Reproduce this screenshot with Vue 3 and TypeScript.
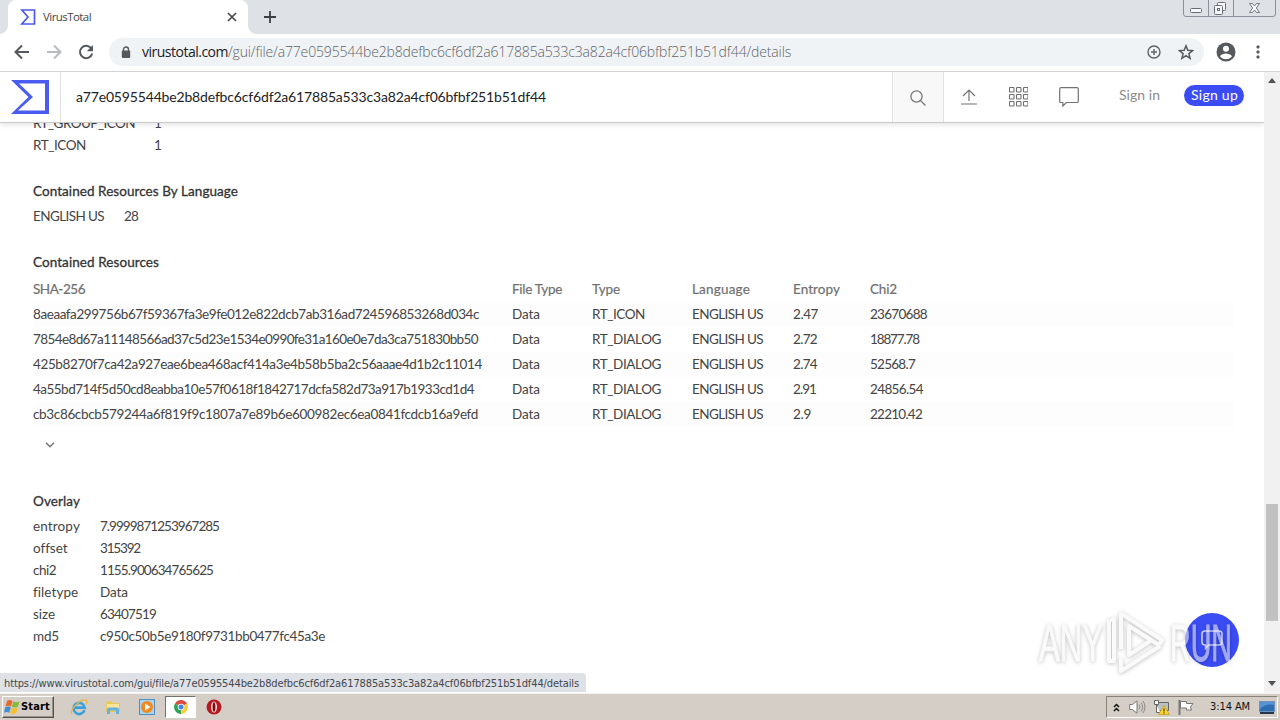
<script setup lang="ts">
import type { Directive } from 'vue'

// Spreads the letters of a label so that its ink takes the given width in pixels.
const vFit: Directive<HTMLElement, number> = {
  mounted(el, binding) {
    const count = (el.textContent ?? '').length
    const natural = el.getBoundingClientRect().width
    if (count > 1) el.style.letterSpacing = `${(binding.value - 1 - natural) / count}px`
  },
}

interface Resource { sha: string; width: number; type: string; typeWidth: number; entropy: string; entropyWidth: number; chi: string; chiWidth: number }
interface Field { name: string; nameWidth: number; value: string; valueWidth: number }

const hash = 'a77e0595544be2b8defbc6cf6df2a617885a533c3a82a4cf06bfbf251b51df44'

const resources: Resource[] = [
  { sha: '8aeaafa299756b67f59367fa3e9fe012e822dcb7ab316ad724596853268d034c', width: 447, type: 'RT_ICON', typeWidth: 54, entropy: '2.47', entropyWidth: 26, chi: '23670688', chiWidth: 58 },
  { sha: '7854e8d67a11148566ad37c5d23e1534e0990fe31a160e0e7da3ca751830bb50', width: 446, type: 'RT_DIALOG', typeWidth: 70, entropy: '2.72', entropyWidth: 25, chi: '18877.78', chiWidth: 50 },
  { sha: '425b8270f7ca42a927eae6bea468acf414a3e4b58b5ba2c56aaae4d1b2c11014', width: 450, type: 'RT_DIALOG', typeWidth: 70, entropy: '2.74', entropyWidth: 25, chi: '52568.7', chiWidth: 46 },
  { sha: '4a55bd714f5d50cd8eabba10e57f0618f1842717dcfa582d73a917b1933cd1d4', width: 442, type: 'RT_DIALOG', typeWidth: 70, entropy: '2.91', entropyWidth: 24, chi: '24856.54', chiWidth: 54 },
  { sha: 'cb3c86cbcb579244a6f819f9c1807a7e89b6e600982ec6ea0841fcdcb16a9efd', width: 446, type: 'RT_DIALOG', typeWidth: 70, entropy: '2.9', entropyWidth: 19, chi: '22210.42', chiWidth: 53 },
]

const overlay: Field[] = [
  { name: 'entropy', nameWidth: 48, value: '7.9999871253967285', valueWidth: 120 },
  { name: 'offset', nameWidth: 35, value: '315392', valueWidth: 41 },
  { name: 'chi2', nameWidth: 24, value: '1155.900634765625', valueWidth: 114 },
  { name: 'filetype', nameWidth: 46, value: 'Data', valueWidth: 29 },
  { name: 'size', nameWidth: 23, value: '63407519', valueWidth: 57 },
  { name: 'md5', nameWidth: 27, value: 'c950c50b5e9180f9731bb0477fc45a3e', valueWidth: 226 },
]
</script>

<template>
  <div class="screen">
    <div class="tabstrip">
      <div class="tab">
        <svg class="tab-logo" width="16" height="16" viewBox="0 0 16 16"><path d="M1.8 1H14.500V15H1.800L8 8Z" fill="none" stroke="#4a58ee" stroke-width="1.700" /></svg>
        <span v-fit="49" class="tab-title">VirusTotal</span>
        <svg class="tab-close" width="10" height="10" viewBox="0 0 10 10"><path d="M1 1l8 8M9 1L1 9" stroke="#45484b" stroke-width="1.700" /></svg>
      </div>
      <svg class="new-tab" width="12" height="12" viewBox="0 0 12 12"><path d="M6 0v12M0 6h12" stroke="#3c4043" stroke-width="1.800" /></svg>
      <div class="winbuttons">
        <svg width="93" height="17" viewBox="0 0 93 17" fill="none">
          <path d="M.5 0V14Q.5 16.500 3 16.500H90Q92.500 16.500 92.500 14V0M25.500 0V16M50.500 0V16" stroke="#8b919b" />
          <rect x="7.500" y="8.500" width="11" height="4" rx="1" fill="#f7f8fa" stroke="#686d75" />
          <rect x="34.500" y="2.500" width="8" height="8" rx="1" fill="#f7f8fa" stroke="#686d75" />
          <rect x="31.500" y="5.500" width="8" height="9" rx="1" fill="#f7f8fa" stroke="#686d75" /><rect x="34.500" y="8.500" width="2" height="2" stroke="#686d75" />
          <path d="M66.500 3.500h3l2 2.500 2-2.500h3l-3.200 4.500 3.200 4.500h-3l-2-2.500-2 2.500h-3l3.200-4.500z" fill="#f7f8fa" stroke="#757a82" />
        </svg>
      </div>
    </div>

    <div class="toolbar">
      <svg class="nav" width="16" height="16" viewBox="0 0 16 16"><path d="M15 8H2M8 1.500L1.500 8 8 14.500" fill="none" stroke="#55585c" stroke-width="2" /></svg>
      <svg class="nav" width="16" height="16" viewBox="0 0 16 16"><path d="M1 8h13M8 1.500L14.500 8 8 14.500" fill="none" stroke="#b9bbbd" stroke-width="2" /></svg>
      <svg class="nav" width="16" height="16" viewBox="0 0 16 16"><path d="M13.300 4.400A6.200 6.200 0 1 0 14.200 9.500" fill="none" stroke="#55585c" stroke-width="2" /><path d="M15 1v6.200H8.800z" fill="#55585c" /></svg>
      <div class="omnibox">
        <svg class="lock" width="10" height="12" viewBox="0 0 10 12"><path d="M2.500 5V3.500a2.500 2.500 0 0 1 5 0V5" fill="none" stroke="#55585c" stroke-width="1.400" /><rect x=".8" y="4.500" width="8.400" height="7.500" rx="1" fill="#55585c" /></svg>
        <span v-fit="87" class="url host">virustotal.com</span><span v-fit="564" class="url path">/gui/file/{{ hash }}/details</span>
        <svg class="zoomed" width="14" height="14" viewBox="0 0 14 14" fill="none" stroke="#5f6368" stroke-width="1.400"><circle cx="7" cy="7" r="6" /><path d="M7 4v6M4 7h6" /></svg>
        <svg class="star" width="16" height="16" viewBox="0 0 16 16"><path d="M8 1.800l1.800 4.500 4.800.3-3.700 3 1.200 4.700L8 11.700l-4.100 2.600 1.200-4.700-3.700-3 4.800-.3z" fill="none" stroke="#55585c" stroke-width="1.500" /></svg>
      </div>
      <svg class="avatar" width="20" height="20" viewBox="0 0 20 20"><circle cx="10" cy="10" r="9.500" fill="#55585c" /><circle cx="10" cy="6.800" r="3" fill="#fff" /><path d="M4 14.300c1.200-2 3.500-2.800 6-2.800s4.800.8 6 2.800c-1.400 1.800-3.500 2.900-6 2.900s-4.600-1.100-6-2.900z" fill="#fff" /></svg>
      <svg class="dots" width="4" height="14" viewBox="0 0 4 14" fill="#55585c"><rect x=".5" y=".5" width="3" height="3" rx="1" /><rect x=".5" y="5.500" width="3" height="3" rx="1" /><rect x=".5" y="10.500" width="3" height="3" rx="1" /></svg>
    </div>

    <div class="viewport">
      <div class="page">
        <header class="header">
          <div class="brand"><svg width="38" height="34" viewBox="0 0 38 34"><path fill-rule="evenodd" d="M0 0H38V34H0L17.500 17ZM8 3.500L22 17 7 30.500H34V3.500Z" fill="#4a5cf0" /></svg></div>
          <div class="query"><span v-fit="471">{{ hash }}</span></div>
          <div class="search"><svg width="16" height="16" viewBox="0 0 16 16" fill="none" stroke="#777" stroke-width="1.300"><circle cx="6.500" cy="6.500" r="5.600" /><path d="M10.600 10.600l4.900 4.900" /></svg></div>
          <svg class="upload" width="16" height="16" viewBox="0 0 16 16" fill="none" stroke="#737373" stroke-width="1.200"><path d="M8 12V1M2 7l6-6 6 6M0 15h16" /></svg>
          <svg class="apps" width="19" height="20" viewBox="0 0 19 20" fill="none" stroke="#6c6c6c" stroke-width="1.100">
            <template v-for="r in 3" :key="r"><rect v-for="c in 3" :key="c" :x="c * 7 - 6.5" :y="r * 7 - 6.5" width="4.500" height="4.500" rx=".8" /></template>
          </svg>
          <svg class="comments" width="20" height="20" viewBox="0 0 20 20" fill="none" stroke="#737373" stroke-width="1.200"><path d="M2 .7h16q1.300 0 1.300 1.300v12.200q0 1.300-1.300 1.300H7.500L3.800 19v-3.500H2Q.7 15.500.7 14.200V2Q.7.700 2 .7z" /></svg>
          <div class="signin"><span v-fit="42">Sign in</span></div>
          <div class="signup"><span v-fit="48">Sign up</span></div>
        </header>

        <main class="details">
          <div class="line"><span class="res-name"><span v-fit="103">RT_GROUP_ICON</span></span><span>1</span></div>
          <div class="line"><span class="res-name"><span v-fit="54">RT_ICON</span></span><span>1</span></div>
          <h3><span v-fit="206">Contained Resources By Language</span></h3>
          <div class="line"><span class="lang-name"><span v-fit="72">ENGLISH US</span></span><span v-fit="15">28</span></div>
          <h3><span v-fit="127">Contained Resources</span></h3>
          <div class="row head">
            <div><span v-fit="53">SHA-256</span></div><div><span v-fit="51">File Type</span></div><div><span v-fit="29">Type</span></div><div><span v-fit="59">Language</span></div><div><span v-fit="48">Entropy</span></div><div><span v-fit="28">Chi2</span></div>
          </div>
          <div v-for="r in resources" :key="r.sha" class="row">
            <div><span v-fit="r.width">{{ r.sha }}</span></div><div><span v-fit="29">Data</span></div><div><span v-fit="r.typeWidth">{{ r.type }}</span></div><div><span v-fit="72">ENGLISH US</span></div><div><span v-fit="r.entropyWidth">{{ r.entropy }}</span></div><div><span v-fit="r.chiWidth">{{ r.chi }}</span></div>
          </div>
          <div class="more"><svg width="10" height="6" viewBox="0 0 10 6"><path d="M1 .8l4 4 4-4" fill="none" stroke="#737373" stroke-width="1.400" /></svg></div>
          <h3 class="overlay-title"><span v-fit="48">Overlay</span></h3>
          <div v-for="f in overlay" :key="f.name" class="line"><span class="field"><span v-fit="f.nameWidth">{{ f.name }}</span></span><span v-fit="f.valueWidth">{{ f.value }}</span></div>
        </main>

        <div class="chat"><svg width="24" height="22" viewBox="0 0 24 22" fill="none" stroke="#cfd4ff" stroke-width="1.500"><path d="M5 2h14q3 0 3 3v8q0 3-3 3H8.500L5.500 19.500V16H5q-3 0-3-3V5q0-3 3-3z" /></svg></div>
        <svg class="watermark" width="204" height="68" viewBox="0 0 204 68">
          <g class="mark-letters"><text x="3" y="53" textLength="64" lengthAdjust="spacingAndGlyphs">ANY</text><text x="134" y="53" textLength="62" lengthAdjust="spacingAndGlyphs">RUN</text></g>
          <path class="mark-play" d="M73 53V13l5-2v42zM85 41V5.500l41 26.500-3 5L93 18v29l21-14M85 50v13l39-25" />
        </svg>
        <div class="status"><span v-fit="576">https://www.virustotal.com/gui/file/{{ hash }}/details</span></div>
      </div>
      <div class="scrollbar">
        <svg class="arrow" width="8" height="5" viewBox="0 0 8 5"><path d="M0 5l4-5 4 5z" fill="#505050" /></svg>
        <div class="thumb"></div>
        <svg class="arrow" width="8" height="5" viewBox="0 0 8 5"><path d="M0 0l4 5 4-5z" fill="#505050" /></svg>
      </div>
    </div>

    <div class="taskbar">
      <div class="start">
        <svg width="16" height="16" viewBox="0 0 16 16"><path d="M3 2q3-2 5.500 0L7 7.500Q4.500 6 1.500 7.500z" fill="#e8682c" /><path d="M9.300 2.300q3 1.700 6.200 0L14 7.800q-3 1.500-6.200 0z" fill="#86b93b" /><path d="M1.300 8.300q3-1.500 5.500 0l-1.600 5.500q-2.500-1.600-5.200 0z" fill="#3c8fd5" /><path d="M7.600 8.600q3 1.600 6.200 0l-1.600 5.600q-3 1.600-6.200 0z" fill="#f6bf31" /></svg>
        <span v-fit="30">Start</span>
      </div>
      <div class="quick q-ie"><svg width="18" height="18" viewBox="0 0 18 18" fill="none"><path d="M14.500 12.200A5.600 5.600 0 1 1 14.700 9.600H5" stroke="#39a0df" stroke-width="2.600" /><path d="M2 16C-1 12 10 1 16 2q2 .8 0 4.500" stroke="#edb83c" stroke-width="1.300" /></svg></div>
      <div class="quick"><svg width="18" height="18" viewBox="0 0 18 18"><path d="M2 3.500h6l1 1.500h7v9H2z" fill="#e9c75a" /><path d="M3 6h12v6H3z" fill="#f8e59a" /><path d="M3 11.500q0-2 2-2h8q2 0 2 2V16h-3v-3.500H6V16H3z" fill="#64b2de" /></svg></div>
      <div class="quick"><svg width="18" height="18" viewBox="0 0 18 18"><rect x="1.500" y="1.500" width="15" height="15" fill="#a9d3ee" stroke="#4d91c4" /><circle cx="9" cy="9" r="6" fill="#f08a20" /><path d="M7 5.500l5.500 3.500L7 12.500z" fill="#fff" /></svg></div>
      <div class="quick active"><svg width="14" height="14" viewBox="0 0 14 14"><path d="M7 7L1 3.500A7 7 0 0 1 13 3.500z" fill="#de4a3d" /><path d="M7 7L13 3.500A7 7 0 0 1 7 14z" fill="#f9cd3d" /><path d="M7 7V14A7 7 0 0 1 1 3.500z" fill="#32a055" /><circle cx="7" cy="7" r="3.300" fill="#fff" /><circle cx="7" cy="7" r="2.500" fill="#4685e8" /></svg></div>
      <div class="quick q-opera"><svg width="16" height="16" viewBox="0 0 16 16"><circle cx="8" cy="8" r="7.500" fill="#b51a20" /><ellipse cx="8" cy="8" rx="3" ry="5.600" fill="#f4dedd" /><ellipse cx="8" cy="8" rx="1.400" ry="4.800" fill="#7c0c10" /></svg></div>
      <div class="tray">
        <svg class="t-up" width="7" height="9" viewBox="0 0 7 9"><path d="M1 4l2.500-2.500L6 4M1 8l2.500-2.500L6 8" fill="none" stroke="#111" stroke-width="1.500" /></svg>
        <svg class="t-sound" width="17" height="14" viewBox="0 0 17 14"><path d="M.7 4.500H3.500L8 .8v12.400L3.500 9.500H.7z" fill="#fff" stroke="#777" /><path d="M10 4.500q2 2.500 0 5M12 2.500q3.300 4.500 0 9M14 1q4 6 0 12" fill="none" stroke="#8a8a8a" /></svg>
        <svg class="t-net" width="17" height="16" viewBox="0 0 17 16"><path d="M4.500 3.500h11v8h-11z" fill="#b9c0c7" stroke="#666" /><path d="M1.500 1.500h4v4h-4zM3.500 5.500v8h4" fill="#fff" stroke="#666" /><path d="M11 6.500l5.500 9h-11z" fill="#ffd62b" stroke="#c19a0a" stroke-width=".7" /><path d="M11 9.500v3M11 13.300v1.200" stroke="#333" stroke-width="1.200" /></svg>
        <svg class="t-flag" width="16" height="15" viewBox="0 0 16 15"><path d="M1.500 0v15" stroke="#777" stroke-width="2" /><path d="M2.500 1.500h6v2h6.500l-2.500 3.500 1 3h-5v-2h-6z" fill="#fff" stroke="#777" /></svg>
        <span v-fit="41" class="clock">3:14 AM</span>
        <svg class="t-desk" width="16" height="13" viewBox="0 0 16 13"><rect x=".5" y=".5" width="15" height="10" fill="#2e6cb3" stroke="#6f93b8" /><path d="M1 8Q7 2 15 4V1H1z" fill="#5593d2" /><path d="M1 12h14" stroke="#24354d" stroke-width="2" /></svg>
      </div>
    </div>
  </div>
</template>

<style>
html, body { margin: 0; overflow: hidden; background: #fff; }
</style>

<style scoped>
.screen { width: 1280px; height: 720px; display: flex; flex-direction: column; overflow: hidden; background: #fff; font-family: Lato, "Liberation Sans", sans-serif; }
.screen * { box-sizing: border-box; }
svg { display: block; flex: none; }
span { white-space: nowrap; }

.tabstrip { height: 34px; flex: none; display: flex; background: #dee1e6; }
.tab { position: relative; width: 240px; height: 34px; margin-left: 8px; padding-left: 12px; display: flex; align-items: center; background: #fff; border-radius: 8px 8px 0 0; }
.tab::before, .tab::after { content: ""; position: absolute; bottom: 0; width: 8px; height: 8px; }
.tab::before { left: -8px; background: radial-gradient(circle at 0 0, #dee1e6 7.5px, #fff 8px); }
.tab::after { right: -8px; background: radial-gradient(circle at 100% 0, #dee1e6 7.5px, #fff 8px); }
.tab-title { margin-left: 7px; font: 11.500px/16px "Open Sans", sans-serif; color: #45484b; }
.tab-close { margin: 0 11px 0 auto; }
.new-tab { margin: 11px 0 0 16px; }
.winbuttons { margin: 0 4px 0 auto; }

.toolbar { height: 38px; flex: none; display: flex; align-items: center; padding: 0 19px 1px 14px; border-bottom: 1px solid #d4d5d7; background: #fff; }
.nav { margin-right: 16px; }
.omnibox { width: 1095px; flex: none; height: 28px; margin-left: -1px; padding: 0 10px 0 12px; display: flex; align-items: center; border-radius: 14px; background: #f0f3f5; }
.lock { margin-right: 11px; }
.url { font: 300 14px/20px "Open Sans", sans-serif; }
.host { color: #202124; font-weight: 400; }
.path { color: #5f6368; }
.zoomed { margin-left: auto; }
.star { margin-left: 17px; }
.avatar { margin-left: 12px; }
.dots { margin-left: 20px; }

.viewport { height: 621px; flex: none; display: flex; }
.page { position: relative; width: 1264px; overflow: hidden; }
.header { position: absolute; z-index: 2; inset: 0 0 auto 0; height: 51px; display: flex; align-items: center; background: #fff; border-bottom: 1px solid #c9c9c9; box-shadow: 0 2px 5px rgba(0, 0, 0, .1); }
.brand { width: 61px; height: 50px; padding: 8px 0 0 11px; border-right: 1px solid #e0e0e0; }
.query { width: 831px; padding-left: 15px; font-size: 14px; line-height: 20px; color: #222; }
.search { width: 52px; height: 50px; display: grid; place-items: center; border: solid #e2e2e2; border-width: 0 1px; background: #f8f8f8; }
.search svg { margin-top: 2px; }
.upload { margin-left: 17px; }
.apps { margin-left: 32px; }
.comments { margin-left: 31px; }
.signin { width: 42px; margin: -4px 0 0 40px; font-size: 14px; line-height: 20px; color: #8b8b8b; }
.signup { width: 60px; height: 21px; margin: -3px 0 0 23px; padding-left: 7px; font-size: 14px; line-height: 20px; border-radius: 11px; color: #fff; background: #3b4cf5; }

.details { padding: 40px 30px 0 33px; font-size: 13.500px; line-height: 22px; color: #444; }
.line { height: 22px; display: flex; }
.res-name { width: 121px; flex: none; }
.lang-name { width: 91px; flex: none; }
.field { width: 67px; flex: none; }
h3 { height: 22px; margin: 24px 0 3px; font-size: 13.500px; font-weight: 400; -webkit-text-stroke: .3px #333; color: #333; }
.row { height: 25px; padding-top: 1px; display: grid; grid-template-columns: 479px 80px 100px 101px 77px 1fr; }
.row:nth-child(odd) { background: #fdfdfd; }
.row.head { margin-top: 4px; background: none; color: #707070; -webkit-text-stroke: .2px #707070; }
.more { height: 33px; padding: 15px 0 0 12px; }
.overlay-title { margin-top: 30px; }

.chat { position: absolute; left: 1185px; top: 541px; width: 54px; height: 54px; display: grid; place-items: center; border-radius: 50%; background: #3b4cf5; }
.watermark { position: absolute; left: 1036px; top: 536px; overflow: visible; filter: drop-shadow(0 1px 2px rgba(0, 0, 0, .45)); opacity: .55; }
.mark-letters { font: 52px "Liberation Sans Narrow", "Liberation Sans", sans-serif; fill: #f6f6f6; stroke: #f6f6f6; stroke-width: 1; }
.mark-play { fill: none; stroke: #f6f6f6; stroke-width: 4; stroke-linejoin: round; }
.status { position: absolute; left: 0; bottom: 1px; width: 586px; height: 19px; padding-left: 4px; font: 11px/21px "DejaVu Sans Condensed", "DejaVu Sans", sans-serif; color: #44474b; background: #dee1e6; border-top-right-radius: 4px; }
.scrollbar { width: 16px; display: flex; flex-direction: column; align-items: center; padding: 6px 0 7px; background: #f1f1f1; }
.thumb { width: 12px; height: 117px; margin: auto 0 60px; background: #c1c1c1; }

.taskbar { height: 27px; flex: none; display: flex; align-items: center; padding: 0 2px; border-top: 1px solid #f5f3ef; background: #d5cec6; }
.start { width: 52px; height: 22px; display: flex; align-items: center; padding-left: 1px; border: 1px solid; border-color: #fff #55514c #55514c #fff; box-shadow: inset -1px -1px #98918a; font: 700 11px/18px "DejaVu Sans Condensed", "DejaVu Sans", sans-serif; color: #000; }
.start span { margin-left: 1px; }
.quick { width: 34px; height: 22px; display: grid; place-items: center; }
.q-ie { margin-left: 8px; }
.active { width: 31px; margin-left: 1px; border: 1px solid; border-color: #77716b #fff #fff #77716b; background: #fff; }
.q-opera { margin-left: 1px; }
.tray { width: 172px; height: 22px; margin-left: auto; display: flex; align-items: center; padding-left: 6px; border: 1px solid; border-color: #8a837b #fff #fff #8a837b; }
.t-sound { margin-left: 9px; }
.t-net { margin-left: 7px; }
.t-flag { margin-left: 8px; }
.clock { margin-left: 16px; font: 11px/18px "DejaVu Sans Condensed", "DejaVu Sans", sans-serif; color: #111; }
.t-desk { margin-left: 9px; }
</style>
